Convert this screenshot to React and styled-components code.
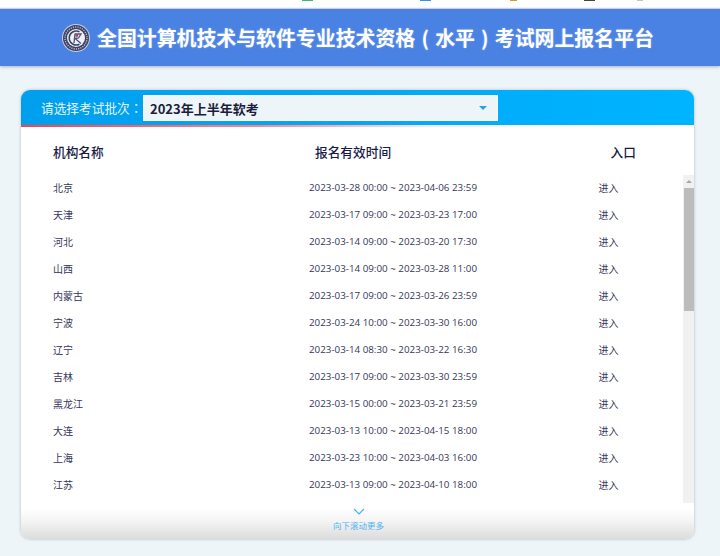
import React from "react";
import styled, { createGlobalStyle } from "styled-components";

const GlobalStyle = createGlobalStyle`
  html, body {
    margin: 0;
    padding: 0;
    background: #eef5f8;
    font-family: "Noto Sans CJK SC", "Open Sans", sans-serif;
  }
`;

const Page = styled.div`
  width: 720px;
  height: 556px;
  overflow: hidden;
  display: flex;
  flex-direction: column;
`;

const TopStrip = styled.div`
  height: 9px;
  background: #fff;
  display: flex;
  align-items: flex-start;
  flex-shrink: 0;
`;

const TopMark = styled.span`
  height: 1px;
  width: ${({ $w }) => $w}px;
  margin-left: ${({ $gap }) => $gap}px;
  background: ${({ $color }) => $color};
`;

const Banner = styled.header`
  height: 57px;
  flex-shrink: 0;
  background: #4a82e4;
  box-shadow: 0 1px 3px rgba(90, 100, 120, 0.45), 0 -1px 1px rgba(120, 130, 150, 0.3);
  display: flex;
  align-items: center;
  padding-left: 62px;
  gap: 7px;
  position: relative;
`;

const Title = styled.h1`
  margin: 0;
  color: #fff;
  font-size: 19.9px;
  font-weight: 700;
  line-height: 28px;
  white-space: nowrap;
  text-shadow: 0 0 2px rgba(255, 255, 255, 0.35);
`;

/* the reference centres full-width punctuation, which the TC face does */
const Punct = styled.span`
  font-family: "Noto Sans CJK TC", sans-serif;
`;

/* brackets sit mid-cell in the reference: half-width glyph centred in a full cell */
const Bracket = styled.span`
  display: inline-block;
  width: 1em;
  text-align: center;
`;

const Card = styled.section`
  width: 673px;
  height: 449px;
  margin: 24px 0 0 21px;
  background: #fff;
  border-radius: 9px;
  box-shadow: 0 0 3px rgba(110, 125, 140, 0.55);
  overflow: hidden;
  position: relative;
  display: flex;
  flex-direction: column;
`;

const CardHead = styled.div`
  height: 35px;
  flex-shrink: 0;
  background: linear-gradient(90deg, #009fee 0%, #00a8f6 45%, #00b4ff 100%);
  display: flex;
  align-items: center;
  padding: 0 0 0 20px;
  box-sizing: border-box;
`;

const PickLabel = styled.span`
  width: 102px;
  color: #e6f4fd;
  font-size: 12.7px;
  white-space: nowrap;
`;

const Picker = styled.div`
  width: 355px;
  height: 26px;
  box-sizing: border-box;
  background: #eef5f8;
  border: 1px solid #fff;
  display: flex;
  align-items: center;
  justify-content: space-between;
  padding: 1px 10px 0 6px;
  color: #1c1c3c;
  font-size: 13px;
  font-weight: 700;
`;

const Caret = styled.i`
  width: 0;
  height: 0;
  border-left: 4px solid transparent;
  border-right: 4px solid transparent;
  border-top: 4px solid #1fa6ea;
`;

const RedLine = styled.div`
  height: 2px;
  flex-shrink: 0;
  background: linear-gradient(90deg, #f5434c 0%, #f8868c 35%, #fde3e4 60%, #fff 85%);
`;

const ColumnHead = styled.div`
  height: 47px;
  flex-shrink: 0;
  box-sizing: border-box;
  display: grid;
  grid-template-columns: 262px 295.6px auto;
  align-items: center;
  padding: 2px 0 0 32px;
  color: #1a1a46;
  font-size: 12.7px;
  font-weight: 500;
`;

const Body = styled.div`
  flex: 1;
  min-height: 0;
  display: flex;
`;

const List = styled.div`
  flex: 1;
  min-width: 0;
  overflow: hidden;
`;

const Row = styled.div`
  height: 27px;
  display: grid;
  grid-template-columns: 256px 289.6px auto;
  align-items: center;
  padding-left: 32px;
  color: #36365a;
  font-size: 10px;
  white-space: nowrap;
`;

const DateCell = styled.span`
  font-family: "Open Sans", sans-serif;
  font-size: 9.8px;
`;

const ScrollTrack = styled.div`
  width: 11px;
  height: 328px;
  margin-top: 1px;
  flex-shrink: 0;
  background: #f1f1f1;
  display: flex;
  flex-direction: column;
  align-items: flex-end;
`;

const ScrollUp = styled.div`
  width: 100%;
  height: 13px;
  flex-shrink: 0;
  display: flex;
  align-items: center;
  justify-content: center;
  &::before {
    content: "";
    border-left: 3px solid transparent;
    border-right: 3px solid transparent;
    border-bottom: 3px solid #a8a8a8;
  }
`;

const ScrollThumb = styled.div`
  width: 10px;
  height: 123px;
  background: #bcbcbc;
`;

const MoreFade = styled.div`
  position: absolute;
  left: 0;
  right: 0;
  bottom: 0;
  height: 36px;
  background: linear-gradient(180deg, #fff 0%, #fff 15%, #f4f4f4 50%, #dcdcdc 100%);
  display: flex;
  flex-direction: column;
  align-items: center;
  padding-left: 2px;
  box-sizing: border-box;
`;

const MoreText = styled.span`
  color: #4fb4ee;
  font-size: 8.5px;
  line-height: 12px;
  margin-top: 4px;
`;

const Logo = () => (
  <svg width="28" height="28" viewBox="0 0 28 28">
    <circle cx="14" cy="14" r="14" fill="#c9cdd9" />
    <circle cx="14" cy="14" r="13" fill="#3c4164" />
    <circle cx="14" cy="14" r="11" fill="none" stroke="#b9bed0" strokeWidth="1.4" strokeDasharray="1.2 1.1" />
    <circle cx="14" cy="14" r="9" fill="#eef0f6" />
    <path d="M17.5 7.8A7 7 0 1 0 17.5 20.2" fill="none" stroke="#3c4468" strokeWidth="1.6" />
    <path d="M13 9.5L12 19M13 10L19 10L16.5 14L13 14.5L19 19.5" fill="none" stroke="#4c5478" strokeWidth="1.3" />
    <circle cx="14.8" cy="11.6" r="1.4" fill="#c8323e" />
  </svg>
);

const MoreArrow = () => (
  <svg width="12" height="7" viewBox="0 0 12 7" style={{ marginTop: 5, display: "block" }}>
    <path d="M1 1L6 6L11 1" fill="none" stroke="#3fb6f2" strokeWidth="1.2" />
  </svg>
);

const topMarks = [
  { gap: 302, w: 11, color: "#3cb878" },
  { gap: 107, w: 11, color: "#3a8fe0" },
  { gap: 79, w: 7, color: "#d89a30" },
  { gap: 67, w: 11, color: "#444444" },
  { gap: 42, w: 6, color: "#c4c4d0" },
];

const rows = [
  ["北京", "2023-03-28 00:00 ~ 2023-04-06 23:59"],
  ["天津", "2023-03-17 09:00 ~ 2023-03-23 17:00"],
  ["河北", "2023-03-14 09:00 ~ 2023-03-20 17:30"],
  ["山西", "2023-03-14 09:00 ~ 2023-03-28 11:00"],
  ["内蒙古", "2023-03-17 09:00 ~ 2023-03-26 23:59"],
  ["宁波", "2023-03-24 10:00 ~ 2023-03-30 16:00"],
  ["辽宁", "2023-03-14 08:30 ~ 2023-03-22 16:30"],
  ["吉林", "2023-03-17 09:00 ~ 2023-03-30 23:59"],
  ["黑龙江", "2023-03-15 00:00 ~ 2023-03-21 23:59"],
  ["大连", "2023-03-13 10:00 ~ 2023-04-15 18:00"],
  ["上海", "2023-03-23 10:00 ~ 2023-04-03 16:00"],
  ["江苏", "2023-03-13 09:00 ~ 2023-04-10 18:00"],
];

export default function App() {
  return (
    <Page>
      <GlobalStyle />
      <TopStrip>
        {topMarks.map((m) => (
          <TopMark key={m.gap} $gap={m.gap} $w={m.w} $color={m.color} />
        ))}
      </TopStrip>
      <Banner>
        <Logo />
        <Title>
          全国计算机技术与软件专业技术资格<Bracket>(</Bracket>水平<Bracket>)</Bracket>考试网上报名平台
        </Title>
      </Banner>
      <Card>
        <CardHead>
          <PickLabel>
            请选择考试批次<Punct>：</Punct>
          </PickLabel>
          <Picker>
            2023年上半年软考
            <Caret />
          </Picker>
        </CardHead>
        <RedLine />
        <ColumnHead>
          <span>机构名称</span>
          <span>报名有效时间</span>
          <span>入口</span>
        </ColumnHead>
        <Body>
          <List>
            {rows.map(([name, time]) => (
              <Row key={name}>
                <span>{name}</span>
                <DateCell>{time}</DateCell>
                <span>进入</span>
              </Row>
            ))}
          </List>
          <ScrollTrack>
            <ScrollUp />
            <ScrollThumb />
          </ScrollTrack>
        </Body>
        <MoreFade>
          <MoreArrow />
          <MoreText>向下滚动更多</MoreText>
        </MoreFade>
      </Card>
    </Page>
  );
}
